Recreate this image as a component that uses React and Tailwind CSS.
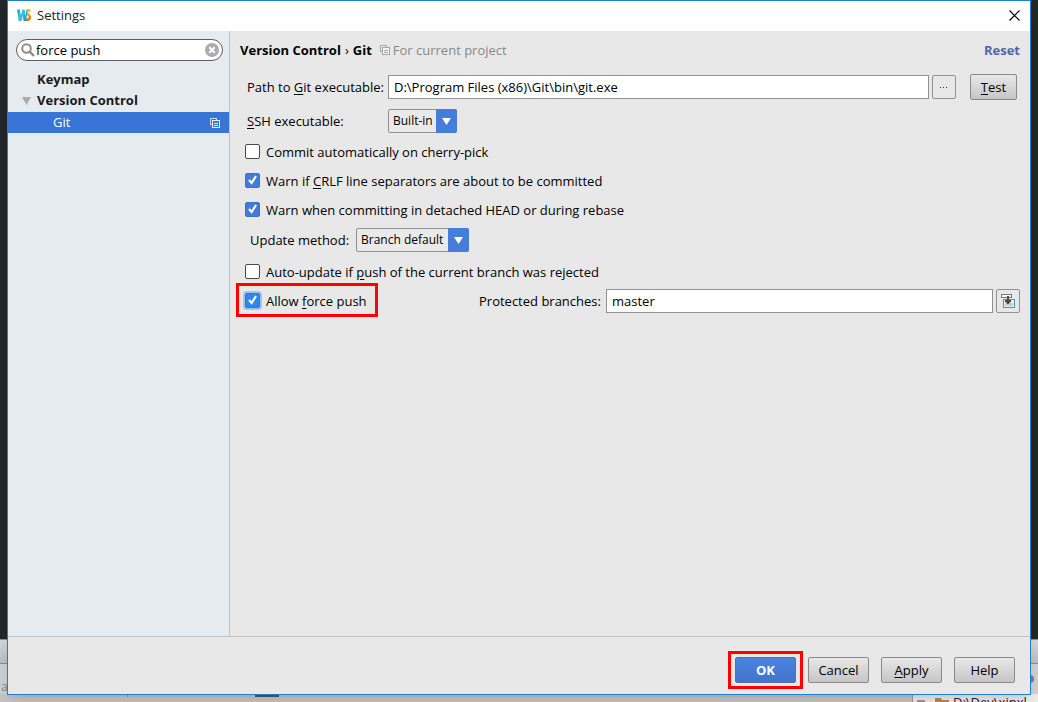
import React, { useState } from 'react';

const ARROW = 'M0 0h9L4.5 7z';

function Backdrop() {
  return (
    <div aria-hidden="true" className="absolute inset-0 flex flex-col bg-[#262626]">
      <div className="flex-1" />
      <div className="flex h-[63px] flex-col border-t border-[#8c8c8c] bg-[#cfcfcf]">
        <div className="h-6 border-b border-[#8c8c8c] bg-linear-to-b from-[#d6d6d6] to-[#bdbdbd]" />
        <div className="flex flex-1 items-center justify-between overflow-hidden text-[12px] text-[#888]">
          <span className="mt-4 ml-px">a</span>
          <span className="mr-1 size-2 rounded-full bg-[#7c78a8]" />
        </div>
        <div className="flex h-2 shrink-0">
          <div className="flex flex-1 bg-[#c4c4c4]">
            <div className="mt-px ml-[127px] h-0.5 w-px bg-[#999]" />
            <div className="mt-px ml-[127px] h-0.5 w-6 bg-[#555]" />
          </div>
          <div className="flex w-[126px] overflow-hidden border-l border-[#999] bg-[#ebebeb] pl-1">
            <div className="mt-1.5 h-0.5 w-2 bg-[#999]" />
            <svg width="14" height="10" viewBox="0 0 14 10" className="mt-1 ml-2.5">
              <path d="M0 0h6l1 2h7v8H0z" fill="#b08a5a" />
            </svg>
            <span className="ml-1 leading-4 text-[#222]">D:\Dev\xinxl</span>
          </div>
        </div>
      </div>
    </div>
  );
}

function CopyIcon({ back, front, fill }) {
  return (
    <svg width="10" height="10" viewBox="0 0 10 10" fill="none" shapeRendering="crispEdges">
      <path d="M2.5 6.5h-2v-6h6v2" stroke={back} />
      <path d="M2.5 2.5h7v7h-7z" stroke={front} fill={fill} />
      <path d="M4 5.5h4M4 7.5h4" stroke={front} />
    </svg>
  );
}

function TitleBar() {
  return (
    <header className="flex h-[30px] shrink-0 items-center bg-white pr-2 pb-0.5 pl-[9px]">
      <svg width="15" height="13" viewBox="0 0 15 13">
        <defs>
          <linearGradient id="w" x1="0" y1="0" x2="1" y2="1">
            <stop offset="0" stopColor="#1fa5d0" />
            <stop offset="0.5" stopColor="#35c3dc" />
            <stop offset="1" stopColor="#1681b8" />
          </linearGradient>
          <linearGradient id="s" x1="0" y1="0" x2="0" y2="1">
            <stop offset="0" stopColor="#f5c02c" />
            <stop offset="1" stopColor="#cf7c16" />
          </linearGradient>
        </defs>
        <path
          d="M13.5 1.800C11.200.8 9.700 2 10 3.700c.4 1.900 3.100 2.400 2.900 4.900-.2 2-2.300 2.600-4.400 2"
          fill="none"
          stroke="url(#s)"
          strokeWidth="2.600"
        />
        <path d="M0 .5h2.800l1.100 6 1.700-6h2l.9 6L9.600.5h1.300L9 12H6.600L5.700 7 4.200 12H1.800z" fill="url(#w)" />
      </svg>
      <h1 className="ml-[5px] flex-1 text-[#222]">Settings</h1>
      <button type="button" aria-label="Close" className="p-0.5">
        <svg width="11" height="11" viewBox="0 0 11 11" stroke="#000" strokeWidth="1.200">
          <path d="M.5.5l10 10M10.500.5l-10 10" />
        </svg>
      </button>
    </header>
  );
}

function Sidebar() {
  const [query, setQuery] = useState('force push');

  return (
    <aside className="w-[222px] shrink-0 border-r border-[#c3c3c3] bg-[#e6ebef]">
      <div className="mx-2 mt-2 mr-1.5 flex h-[22px] items-center rounded-full border border-[#5e5e5e] bg-white pr-[3px] pl-1">
        <svg width="14" height="14" viewBox="0 0 14 14" fill="none" stroke="#8c8c8c" strokeWidth="2">
          <circle cx="5.500" cy="5.500" r="4.300" />
          <path d="M8.700 8.700l4.300 4.300" strokeWidth="2.400" />
        </svg>
        <input
          aria-label="Search settings"
          value={query}
          onChange={(e) => setQuery(e.target.value)}
          className="ml-px min-w-0 flex-1 bg-transparent outline-none"
        />
        <button type="button" aria-label="Clear search" onClick={() => setQuery('')}>
          <svg width="14" height="14" viewBox="0 0 14 14">
            <circle cx="7" cy="7" r="7" fill="#acacac" />
            <path d="M4.300 4.300l5.400 5.400M9.700 4.300L4.300 9.700" stroke="#fff" strokeWidth="2" />
          </svg>
        </button>
      </div>
      <ul className="mt-2 leading-[21px]">
        <li className="pl-[29px] font-bold text-[#1a1a1a]">Keymap</li>
        <li>
          <div className="flex items-center gap-1.5 pl-3.5 font-bold text-[#1a1a1a]">
            <svg width="9" height="8" viewBox="0 0 9 8" fill="#acacac">
              <path d="M0 0h9L4.500 8z" />
            </svg>
            Version Control
          </div>
          <ul className="mt-px">
            <li className="flex items-center justify-between bg-[#3875d7] pr-[9px] pl-[45px] text-white">
              Git
              <CopyIcon back="#c9daf5" front="#e3ecfa" fill="none" />
            </li>
          </ul>
        </li>
      </ul>
    </aside>
  );
}

function Check({ focused, defaultChecked, children }) {
  return (
    <label className="relative flex h-[29px] w-fit items-center gap-1.5">
      <input
        type="checkbox"
        defaultChecked={defaultChecked}
        className={`peer size-[15px] appearance-none rounded-xs border border-[#4a4a4a] bg-white checked:border-[#3b73cc] ${
          focused ? 'ring-2 ring-[#a3c3ea] checked:bg-[#2f86f3]' : 'checked:bg-[#427bd8]'
        }`}
      />
      <svg
        width="15"
        height="15"
        viewBox="0 0 15 15"
        className="pointer-events-none invisible absolute left-0 peer-checked:visible"
      >
        <path d="M4 7l2.600 3L11 3" fill="none" stroke="#fff" strokeWidth="2.200" />
      </svg>
      <span>{children}</span>
    </label>
  );
}

function Select({ id, width, options }) {
  return (
    <div className={`relative h-6 ${width}`}>
      <select
        id={id}
        className="h-full w-full appearance-none rounded-xs border border-[#919191] bg-[#eaeaea] pr-5 pl-1 text-xs outline-none"
      >
        {options.map((o) => (
          <option key={o}>{o}</option>
        ))}
      </select>
      <span className="pointer-events-none absolute inset-y-0 right-0 flex w-[21px] items-center justify-center rounded-r-xs bg-[#467dd8]">
        <svg width="9" height="7" viewBox="0 0 9 7" fill="#fff">
          <path d={ARROW} />
        </svg>
      </span>
    </div>
  );
}

function Key({ children }) {
  return <span className="underline underline-offset-2">{children}</span>;
}

function Button({ primary, small, children }) {
  return (
    <button
      type="button"
      className={`h-[26px] shrink-0 rounded-xs border bg-linear-to-b pb-px ${small ? 'w-[47px]' : 'w-[61px]'} ${
        primary
          ? 'border-[#5873a3] from-[#4a84e2] to-[#4274cb] font-bold text-white'
          : 'border-[#8a8a8a] from-[#e8e8e8] to-[#c6c6c6]'
      }`}
    >
      {children}
    </button>
  );
}

const FIELD = 'h-6 min-w-0 flex-1 border border-[#919191] bg-white px-[5px] outline-none';
const ICON_BUTTON = 'flex size-6 shrink-0 items-center justify-center rounded-xs border border-[#919191] bg-[#e8e8e8]';

function GitSettings() {
  return (
    <main className="min-w-0 flex-1 pr-2.5">
      <div className="flex h-[38px] items-center pl-2.5">
        <h2 className="flex gap-1 font-bold">
          <span>Version Control</span>
          <span className="font-normal">›</span>
          <span>Git</span>
        </h2>
        <span className="ml-2 flex flex-1 items-center gap-[3px] text-[#888]">
          <CopyIcon back="#8bb7cc" front="#a5a5a5" fill="#f4f4f4" />
          For current project
        </span>
        <a href="#reset" className="font-bold text-[#5166a8]">
          Reset
        </a>
      </div>

      <div className="mt-[5px] flex items-center pr-[3px] pl-[17px]">
        <label htmlFor="git-path" className="w-[141px] shrink-0">
          Path to <Key>G</Key>it executable:
        </label>
        <input id="git-path" defaultValue="D:\Program Files (x86)\Git\bin\git.exe" className={FIELD} />
        <button type="button" aria-label="Browse" className={`${ICON_BUTTON} mr-3.5 ml-[3px]`}>
          <svg width="8" height="1" viewBox="0 0 8 1" fill="#333">
            <path d="M0 0h1v1H0zM3 0h1v1H3zM6 0h1v1H6z" />
          </svg>
        </button>
        <Button small>
          <Key>T</Key>est
        </Button>
      </div>

      <div className="mt-[9px] flex items-center pl-[17px]">
        <label htmlFor="ssh" className="w-[141px] shrink-0">
          <Key>S</Key>SH executable:
        </label>
        <Select id="ssh" width="w-[69px]" options={['Built-in', 'Native']} />
      </div>

      <div className="mt-1 pl-[15px]">
        <Check>Commit automatically on cherry-pick</Check>
        <Check defaultChecked>
          Warn if <Key>C</Key>RLF line separators are about to be committed
        </Check>
        <Check defaultChecked>Warn when committing in detached HEAD or during rebase</Check>
      </div>

      <div className="mt-1 flex items-center pl-5">
        <label htmlFor="update" className="w-[106px] shrink-0">
          Update method:
        </label>
        <Select id="update" width="w-[113px]" options={['Branch default', 'Merge', 'Rebase']} />
      </div>

      <div className="mt-[5px] pl-[15px]">
        <Check>
          Auto-update if <Key>p</Key>ush of the current branch was rejected
        </Check>
        <div className="flex items-center">
          <div className="relative w-[234px] shrink-0">
            <Check defaultChecked focused>
              Allow <Key>f</Key>orce push
            </Check>
            <div className="pointer-events-none absolute -top-[3px] -left-[9px] h-[34px] w-[142px] border-3 border-[#fe0000]" />
          </div>
          <label htmlFor="protected" className="w-[127px] shrink-0">
            Protected branches:
          </label>
          <input id="protected" defaultValue="master" className={FIELD} />
          <button type="button" aria-label="Expand" className={`${ICON_BUTTON} ml-[3px]`}>
            <svg width="14" height="14" viewBox="0 0 14 14" shapeRendering="crispEdges">
              <path d="M2.500 5.500h11v8h-11z" fill="#e8f0f4" stroke="#4a97bd" />
              <path d="M4 9h8v3H4z" fill="#b9d3e0" />
              <path d="M.5.5h10v3H.5z" fill="#fff" stroke="#777" />
              <path d="M6 2h2v4h2v2H9v1H8v1H6V9H5V8H4V6h2z" fill="#4d4d4d" />
            </svg>
          </button>
        </div>
      </div>
    </main>
  );
}

export default function App() {
  return (
    <div className="relative flex h-screen overflow-hidden px-[7px] pb-[7px] font-['Open_Sans','Noto_Sans',sans-serif] text-[13px] leading-5 text-black">
      <Backdrop />
      <div className="relative flex min-w-0 flex-1 flex-col border border-[#1a80d2] bg-[#e8e8e8] shadow-lg">
        <TitleBar />
        <div className="flex min-h-0 flex-1">
          <Sidebar />
          <GitSettings />
        </div>
        <footer className="flex h-[58px] shrink-0 justify-end gap-3 border-t border-[#c3c3c3] pt-5 pr-[15px]">
          <div className="relative">
            <Button primary>OK</Button>
            <div className="pointer-events-none absolute -top-1.5 -left-[7px] h-[38px] w-[75px] border-3 border-[#fe0000]" />
          </div>
          <Button>Cancel</Button>
          <Button>
            <Key>A</Key>pply
          </Button>
          <Button>Help</Button>
        </footer>
      </div>
    </div>
  );
}
